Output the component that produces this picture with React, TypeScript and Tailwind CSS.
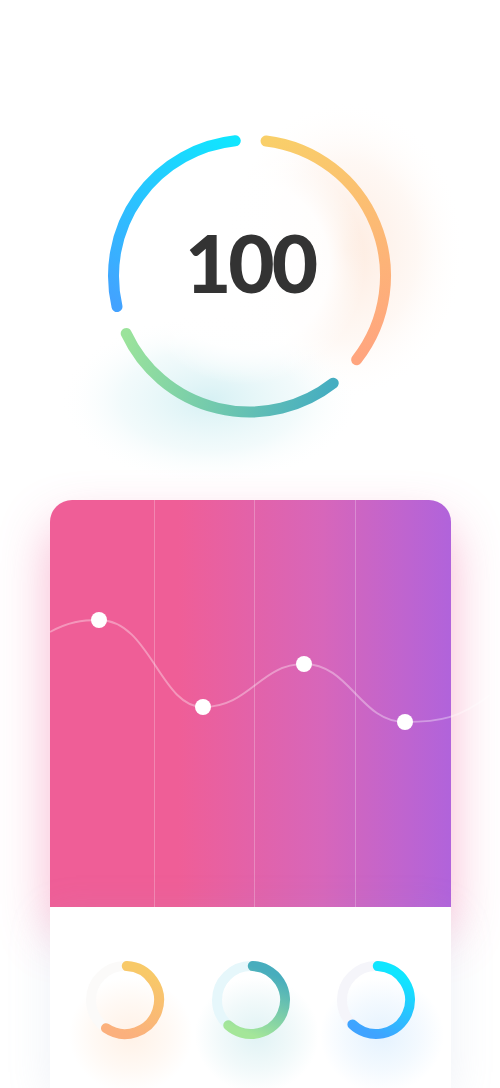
import React from "react";

function pt(cx: number, cy: number, r: number, deg: number) {
  const a = (deg * Math.PI) / 180;
  return { x: cx + r * Math.sin(a), y: cy - r * Math.cos(a) };
}

function arcPath(cx: number, cy: number, r: number, a0: number, a1: number) {
  const p0 = pt(cx, cy, r, a0);
  const p1 = pt(cx, cy, r, a1);
  const large = a1 - a0 > 180 ? 1 : 0;
  return `M ${p0.x.toFixed(2)} ${p0.y.toFixed(2)} A ${r} ${r} 0 ${large} 1 ${p1.x.toFixed(2)} ${p1.y.toFixed(2)}`;
}

function GradArc({
  id,
  cx,
  cy,
  r,
  a0,
  a1,
  c0,
  c1,
  w,
}: {
  id: string;
  cx: number;
  cy: number;
  r: number;
  a0: number;
  a1: number;
  c0: string;
  c1: string;
  w: number;
}) {
  const p0 = pt(cx, cy, r, a0);
  const p1 = pt(cx, cy, r, a1);
  return (
    <>
      <defs>
        <linearGradient id={id} gradientUnits="userSpaceOnUse" x1={p0.x} y1={p0.y} x2={p1.x} y2={p1.y}>
          <stop offset="0" stopColor={c0} />
          <stop offset="1" stopColor={c1} />
        </linearGradient>
      </defs>
      <path d={arcPath(cx, cy, r, a0, a1)} fill="none" stroke={`url(#${id})`} strokeWidth={w} strokeLinecap="round" />
    </>
  );
}

function BigRing() {
  return (
    <div className="relative w-[300px] h-[300px] flex items-center justify-center">
      <svg className="absolute left-[-100px] top-[-126px] overflow-visible" width="500" height="500" viewBox="0 0 500 500">
        <defs>
          <radialGradient id="gOrange" cx="0.5" cy="0.5" r="0.5">
            <stop offset="0" stopColor="#fde3d2" stopOpacity="0.75" />
            <stop offset="0.6" stopColor="#fdebe0" stopOpacity="0.35" />
            <stop offset="1" stopColor="#ffffff" stopOpacity="0" />
          </radialGradient>
          <radialGradient id="gTeal" cx="0.5" cy="0.5" r="0.5">
            <stop offset="0" stopColor="#cfeef2" stopOpacity="0.85" />
            <stop offset="0.6" stopColor="#dff4f6" stopOpacity="0.4" />
            <stop offset="1" stopColor="#ffffff" stopOpacity="0" />
          </radialGradient>
          <radialGradient id="gWhite" cx="0.5" cy="0.5" r="0.5">
            <stop offset="0" stopColor="#ffffff" stopOpacity="1" />
            <stop offset="0.7" stopColor="#ffffff" stopOpacity="0.9" />
            <stop offset="1" stopColor="#ffffff" stopOpacity="0" />
          </radialGradient>
        </defs>
        <ellipse cx="345" cy="250" rx="120" ry="150" fill="url(#gOrange)" />
        <ellipse cx="210" cy="400" rx="150" ry="85" fill="url(#gTeal)" />
        <ellipse cx="245" cy="265" rx="120" ry="120" fill="url(#gWhite)" />
        <GradArc id="aOrange" cx={249.5} cy={276} r={136} a0={7} a1={128} c0="#f9cf69" c1="#ffa57f" w={11} />
        <GradArc id="aTeal" cx={249.5} cy={276} r={136} a0={142} a1={245} c0="#45adc1" c1="#9be39b" w={11} />
        <GradArc id="aBlue" cx={249.5} cy={276} r={136} a0={257} a1={354} c0="#43a2ff" c1="#10e6ff" w={11} />
      </svg>
      <span className="relative mt-[-28px] font-['Lato','Open_Sans',sans-serif] font-black text-[80px] leading-none text-[#333333] tracking-[-3px]">
        100
      </span>
    </div>
  );
}

function SmallRing({
  idx,
  c0,
  c1,
  track,
  glow,
  end,
}: {
  idx: number;
  c0: string;
  c1: string;
  track: string;
  glow: string;
  end: number;
}) {
  return (
    <svg width="100" height="140" viewBox="0 0 100 140" className="overflow-visible">
      <defs>
        <radialGradient id={`sg${idx}`} cx="0.5" cy="0.5" r="0.5">
          <stop offset="0" stopColor={glow} stopOpacity="0.9" />
          <stop offset="0.6" stopColor={glow} stopOpacity="0.4" />
          <stop offset="1" stopColor={glow} stopOpacity="0" />
        </radialGradient>
      </defs>
      <ellipse cx="56" cy="85" rx="62" ry="58" fill={`url(#sg${idx})`} />
      <circle cx="50" cy="50" r="34" fill="none" stroke={track} strokeWidth="10" />
      <GradArc id={`sa${idx}`} cx={50} cy={50} r={34} a0={3} a1={end} c0={c0} c1={c1} w={10} />
    </svg>
  );
}

export default function App() {
  return (
    <div className="w-[500px] h-[1088px] bg-white overflow-hidden flex flex-col">
      <div className="h-[500px] shrink-0 flex justify-center pt-[126px]">
        <BigRing />
      </div>
      <div className="ml-[50px] w-[401px] flex flex-col shrink-0">
        <div className="relative h-[407px] rounded-t-[22px] bg-[linear-gradient(90deg,#ef5e97_0%,#ef5e97_32%,#d766ba_68%,#b163db_100%)] shadow-[0_25px_50px_rgba(239,94,151,0.45)]">
          <div className="absolute inset-0 grid grid-cols-[105px_100px_101px_1fr] rounded-t-[22px] overflow-hidden">
            <div className="border-r border-white/25" />
            <div className="border-r border-white/25" />
            <div className="border-r border-white/25" />
            <div />
          </div>
          <svg className="absolute left-0 top-0 overflow-visible" width="401" height="407" viewBox="0 0 401 407">
            <path
              d="M 0 132 C 18 122, 32 120, 49 120 C 100 120, 110 207, 153 207 C 200 207, 210 164, 254 164 C 300 164, 310 222, 355 222 C 390 222, 410 218, 440 195"
              fill="none"
              stroke="rgba(255,255,255,0.35)"
              strokeWidth="2"
            />
            <circle cx="49" cy="120" r="8" fill="#ffffff" />
            <circle cx="153" cy="207" r="8" fill="#ffffff" />
            <circle cx="254" cy="164" r="8" fill="#ffffff" />
            <circle cx="355" cy="222" r="8" fill="#ffffff" />
          </svg>
        </div>
        <div className="relative h-[181px] bg-white shadow-[0_10px_40px_rgba(160,180,210,0.18)] flex justify-between px-[25px] pt-[43px]">
          <SmallRing idx={1} c0="#f8c968" c1="#fbb07d" track="#fbfaf9" glow="#fff0e4" end={214} />
          <SmallRing idx={2} c0="#48adbd" c1="#a4e699" track="#e6f7fb" glow="#ddf1f3" end={222} />
          <SmallRing idx={3} c0="#10e6ff" c1="#3fa3ff" track="#f5f5fa" glow="#e2f1fe" end={224} />
        </div>
      </div>
    </div>
  );
}
